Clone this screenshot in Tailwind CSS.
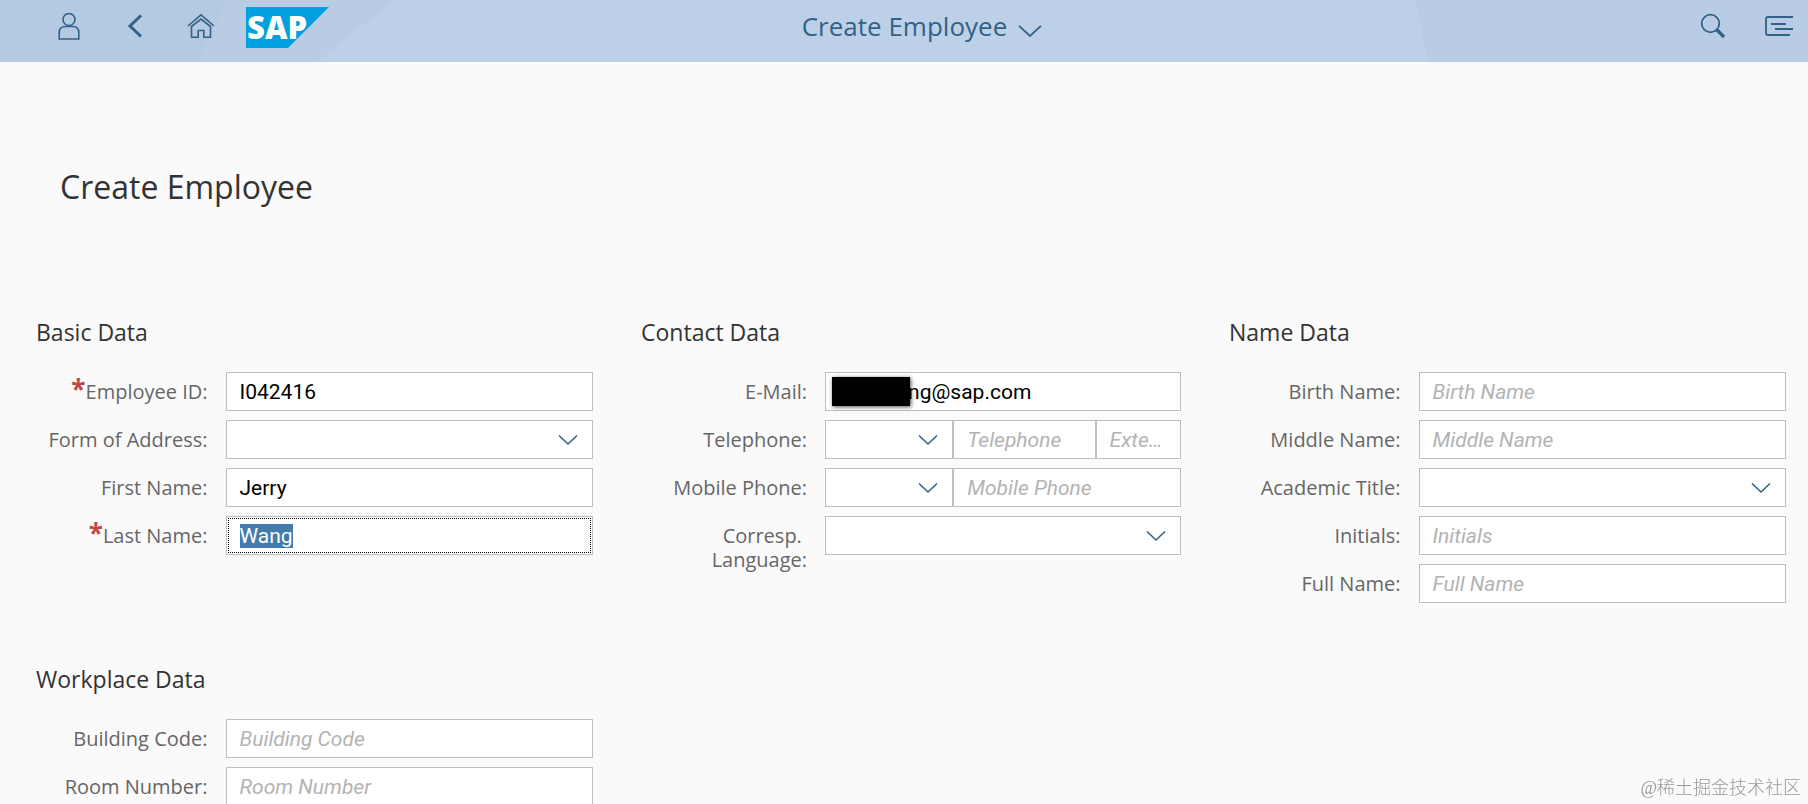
<!DOCTYPE html>
<html lang="en">
  <head>
    <meta charset="UTF-8" />
    <meta name="viewport" content="width=device-width, initial-scale=1.0" />
    <title>Create Employee</title>
    <script src="https://cdn.jsdelivr.net/npm/@tailwindcss/browser@4"></script>
  </head>
  <body
    class="h-screen overflow-hidden bg-[#fafafa] font-['Open_Sans','Noto_Sans',sans-serif] text-[20px] leading-6 text-[#666666]"
  >
    <!-- Shell bar -->
    <header
      class="relative isolate grid h-[62px] grid-cols-[1fr_auto_1fr] items-start bg-[#b4c9e2] text-[#346187]"
    >
      <svg
        class="absolute inset-0 -z-10 h-full w-full"
        viewBox="0 0 1808 62"
        preserveAspectRatio="none"
        aria-hidden="true"
      >
        <path d="M227 0H1416L1428 62H198Z" fill="#b8cde4" />
        <path d="M396 0H1416L1428 62H315Z" fill="#bcd1e7" />
        <path d="M1416 0H1808V62H1428Z" fill="#b8cde5" />
      </svg>

      <div class="flex h-[54px] items-center pl-[58px]">
        <button type="button" aria-label="User" class="mr-[47px]">
          <svg class="h-7 w-[22px]" viewBox="0 0 22 28" fill="none" stroke="currentColor" stroke-width="1.6">
            <circle cx="11" cy="6.500" r="6" />
            <path d="M1.200 26V19.500C1.200 15.500 4 13.500 7.500 13.500H14.500C18 13.500 20.800 15.500 20.800 19.500V26Z" />
          </svg>
        </button>
        <button type="button" aria-label="Back" class="mr-11">
          <svg class="h-7 w-4" viewBox="0 0 16 28" fill="none" stroke="currentColor" stroke-width="3">
            <path d="M14 2.500L3 13L14 23.500" />
          </svg>
        </button>
        <button type="button" aria-label="Home" class="mr-[31px]">
          <svg class="h-7 w-7" viewBox="0 0 28 28" fill="none" stroke="currentColor" stroke-width="1.600">
            <path d="M1 13L14 1.800L27 13" />
            <path d="M4.500 24.300V13.500L14 6L23.500 13.500V24.300H16.800V17.500H11.200V24.300Z" />
          </svg>
        </button>
        <a href="#" aria-label="SAP home">
          <svg class="h-[41px] w-[83px] overflow-visible" viewBox="0 0 83 41">
            <path d="M0 0H83L42 41H0Z" fill="#009fdd" />
            <text
              x="1"
              y="32"
              fill="#fff"
              class="font-['Open_Sans',sans-serif] text-[31px] font-extrabold"
            >SAP</text>
          </svg>
        </a>
      </div>

      <button type="button" class="flex h-[52px] items-center gap-[11px] pl-9 text-[26px] leading-8">
        Create Employee
        <svg class="mt-[10px] h-3 w-6" viewBox="0 0 24 12" fill="none" stroke="currentColor" stroke-width="1.800">
          <path d="M1 0.800L12 11L23 0.800" />
        </svg>
      </button>

      <div class="flex h-[52px] items-center justify-end gap-[39px] pr-[15px]">
        <button type="button" aria-label="Search">
          <svg class="h-[26px] w-[26px]" viewBox="0 0 26 26" fill="none" stroke="currentColor">
            <circle cx="10.500" cy="10.500" r="8.800" stroke-width="1.800" />
            <path d="M16.500 16.500L24 24" stroke-width="3.400" />
          </svg>
        </button>
        <button type="button" aria-label="Notifications">
          <svg class="h-[22px] w-7" viewBox="0 0 28 22" fill="none" stroke="currentColor" stroke-width="1.800">
            <path d="M28 2H3Q1 2 1 4V18Q1 20 3 20H25M6 9H21M10 14H28" />
          </svg>
        </button>
      </div>
    </header>

    <main>
      <h1 class="px-[60px] pt-[105px] text-[32px] leading-10 text-[#333333]">
        Create Employee
      </h1>

      <form class="grid grid-cols-[557fr_540fr_557fr] gap-x-12 gap-y-[60px] pt-[109px] pr-[22px] pl-9">
        <!-- Basic Data -->
        <section>
          <h2 class="mb-6 text-[23px] leading-8 text-[#333333]">Basic Data</h2>
          <div class="grid grid-cols-[7fr_15fr] gap-x-[18px] gap-y-[9px]">
            <label for="employee-id" class="pt-2 text-right"><span class="text-[26px] leading-[0] font-bold text-[#c14646]">*</span>Employee ID:</label>
            <input id="employee-id" type="text" value="I042416" class="h-[39px] w-full border border-[#bfbfbf] bg-white px-[13px] font-['Roboto',sans-serif] text-[21px] text-black" />

            <label for="form-of-address" class="pt-2 text-right">Form of Address:</label>
            <div class="relative">
              <select id="form-of-address" class="h-[39px] w-full appearance-none border border-[#bfbfbf] bg-white px-[13px] font-['Roboto',sans-serif] text-[21px] text-black">
                <option></option>
              </select>
              <svg class="pointer-events-none absolute top-[15px] right-[15px] h-[10px] w-5" viewBox="0 0 20 10" fill="none" stroke="#346187" stroke-width="1.500">
                <path d="M1 0.500L10 9L19 0.500" />
              </svg>
            </div>

            <label for="first-name" class="pt-2 text-right">First Name:</label>
            <input id="first-name" type="text" value="Jerry" class="h-[39px] w-full border border-[#bfbfbf] bg-white px-[13px] font-['Roboto',sans-serif] text-[21px] text-black" />

            <label for="last-name" class="pt-2 text-right"><span class="text-[26px] leading-[0] font-bold text-[#c14646]">*</span>Last Name:</label>
            <input
              id="last-name"
              type="text"
              value="Wang"
              class="h-[39px] w-full border border-[#bfbfbf] bg-white px-[13px] font-['Roboto',sans-serif] text-[21px] text-black selection:bg-[#427cac] selection:text-white focus:outline-1 focus:-outline-offset-3 focus:outline-black focus:outline-dotted"
            />
          </div>
        </section>

        <!-- Contact Data -->
        <section>
          <h2 class="mb-6 text-[23px] leading-8 text-[#333333]">Contact Data</h2>
          <div class="grid grid-cols-[7fr_15fr] gap-x-[18px] gap-y-[9px]">
            <label for="email" class="pt-2 text-right">E-Mail:</label>
            <div class="relative">
              <input id="email" type="text" value="ng@sap.com" class="h-[39px] w-full border border-[#bfbfbf] bg-white pr-3 pl-[82px] font-['Roboto',sans-serif] text-[21px] text-black" />
              <span class="absolute top-[5px] left-[7px] h-[29px] w-[78px] bg-black shadow-[1px_1px_4px_rgba(0,0,0,0.7)]"></span>
            </div>

            <label for="telephone" class="pt-2 text-right">Telephone:</label>
            <div class="grid grid-cols-[9fr_10fr_6fr]">
              <div class="relative">
                <select aria-label="Telephone country code" class="h-[39px] w-full appearance-none border border-[#bfbfbf] bg-white px-[13px] font-['Roboto',sans-serif] text-[21px] text-black">
                  <option></option>
                </select>
                <svg class="pointer-events-none absolute top-[15px] right-[15px] h-[10px] w-5" viewBox="0 0 20 10" fill="none" stroke="#346187" stroke-width="1.500">
                  <path d="M1 0.500L10 9L19 0.500" />
                </svg>
              </div>
              <input id="telephone" type="text" placeholder="Telephone" class="h-[39px] w-full border border-[#bfbfbf] bg-white px-[13px] font-['Roboto',sans-serif] text-[21px] text-black placeholder:text-[#b3b3b3] placeholder:italic" />
              <input type="text" aria-label="Extension" placeholder="Extension" class="h-[39px] w-full border border-[#bfbfbf] bg-white px-[13px] font-['Roboto',sans-serif] text-[21px] text-ellipsis text-black placeholder:text-[#b3b3b3] placeholder:italic" />
            </div>

            <label for="mobile-phone" class="pt-2 text-right">Mobile Phone:</label>
            <div class="grid grid-cols-[9fr_16fr]">
              <div class="relative">
                <select aria-label="Mobile phone country code" class="h-[39px] w-full appearance-none border border-[#bfbfbf] bg-white px-[13px] font-['Roboto',sans-serif] text-[21px] text-black">
                  <option></option>
                </select>
                <svg class="pointer-events-none absolute top-[15px] right-[15px] h-[10px] w-5" viewBox="0 0 20 10" fill="none" stroke="#346187" stroke-width="1.500">
                  <path d="M1 0.500L10 9L19 0.500" />
                </svg>
              </div>
              <input id="mobile-phone" type="text" placeholder="Mobile Phone" class="h-[39px] w-full border border-[#bfbfbf] bg-white px-[13px] font-['Roboto',sans-serif] text-[21px] text-black placeholder:text-[#b3b3b3] placeholder:italic" />
            </div>

            <label for="language" class="pt-2 text-right">Corresp.&nbsp;<br />Language:</label>
            <div class="relative">
              <select id="language" class="h-[39px] w-full appearance-none border border-[#bfbfbf] bg-white px-[13px] font-['Roboto',sans-serif] text-[21px] text-black">
                <option></option>
              </select>
              <svg class="pointer-events-none absolute top-[15px] right-[15px] h-[10px] w-5" viewBox="0 0 20 10" fill="none" stroke="#346187" stroke-width="1.500">
                <path d="M1 0.500L10 9L19 0.500" />
              </svg>
            </div>
          </div>
        </section>

        <!-- Name Data -->
        <section>
          <h2 class="mb-6 text-[23px] leading-8 text-[#333333]">Name Data</h2>
          <div class="grid grid-cols-[7fr_15fr] gap-x-[18px] gap-y-[9px]">
            <label for="birth-name" class="pt-2 text-right">Birth Name:</label>
            <input id="birth-name" type="text" placeholder="Birth Name" class="h-[39px] w-full border border-[#bfbfbf] bg-white px-[13px] font-['Roboto',sans-serif] text-[21px] text-black placeholder:text-[#b3b3b3] placeholder:italic" />

            <label for="middle-name" class="pt-2 text-right">Middle Name:</label>
            <input id="middle-name" type="text" placeholder="Middle Name" class="h-[39px] w-full border border-[#bfbfbf] bg-white px-[13px] font-['Roboto',sans-serif] text-[21px] text-black placeholder:text-[#b3b3b3] placeholder:italic" />

            <label for="academic-title" class="pt-2 text-right">Academic Title:</label>
            <div class="relative">
              <select id="academic-title" class="h-[39px] w-full appearance-none border border-[#bfbfbf] bg-white px-[13px] font-['Roboto',sans-serif] text-[21px] text-black">
                <option></option>
              </select>
              <svg class="pointer-events-none absolute top-[15px] right-[15px] h-[10px] w-5" viewBox="0 0 20 10" fill="none" stroke="#346187" stroke-width="1.500">
                <path d="M1 0.500L10 9L19 0.500" />
              </svg>
            </div>

            <label for="initials" class="pt-2 text-right">Initials:</label>
            <input id="initials" type="text" placeholder="Initials" class="h-[39px] w-full border border-[#bfbfbf] bg-white px-[13px] font-['Roboto',sans-serif] text-[21px] text-black placeholder:text-[#b3b3b3] placeholder:italic" />

            <label for="full-name" class="pt-2 text-right">Full Name:</label>
            <input id="full-name" type="text" placeholder="Full Name" class="h-[39px] w-full border border-[#bfbfbf] bg-white px-[13px] font-['Roboto',sans-serif] text-[21px] text-black placeholder:text-[#b3b3b3] placeholder:italic" />
          </div>
        </section>

        <!-- Workplace Data -->
        <section>
          <h2 class="mb-6 text-[23px] leading-8 text-[#333333]">Workplace Data</h2>
          <div class="grid grid-cols-[7fr_15fr] gap-x-[18px] gap-y-[9px]">
            <label for="building-code" class="pt-2 text-right">Building Code:</label>
            <input id="building-code" type="text" placeholder="Building Code" class="h-[39px] w-full border border-[#bfbfbf] bg-white px-[13px] font-['Roboto',sans-serif] text-[21px] text-black placeholder:text-[#b3b3b3] placeholder:italic" />

            <label for="room-number" class="pt-2 text-right">Room Number:</label>
            <input id="room-number" type="text" placeholder="Room Number" class="h-[39px] w-full border border-[#bfbfbf] bg-white px-[13px] font-['Roboto',sans-serif] text-[21px] text-black placeholder:text-[#b3b3b3] placeholder:italic" />
          </div>
        </section>
      </form>
    </main>

    <p
      class="fixed right-[7px] bottom-1 font-['Liberation_Serif','Noto_Sans_CJK_SC',sans-serif] text-[18px] font-light text-[#999999]"
    >
      @稀土掘金技术社区
    </p>

    <script>
      const lastName = document.getElementById("last-name");
      lastName.focus();
      lastName.select();
    </script>
  </body>
</html>
